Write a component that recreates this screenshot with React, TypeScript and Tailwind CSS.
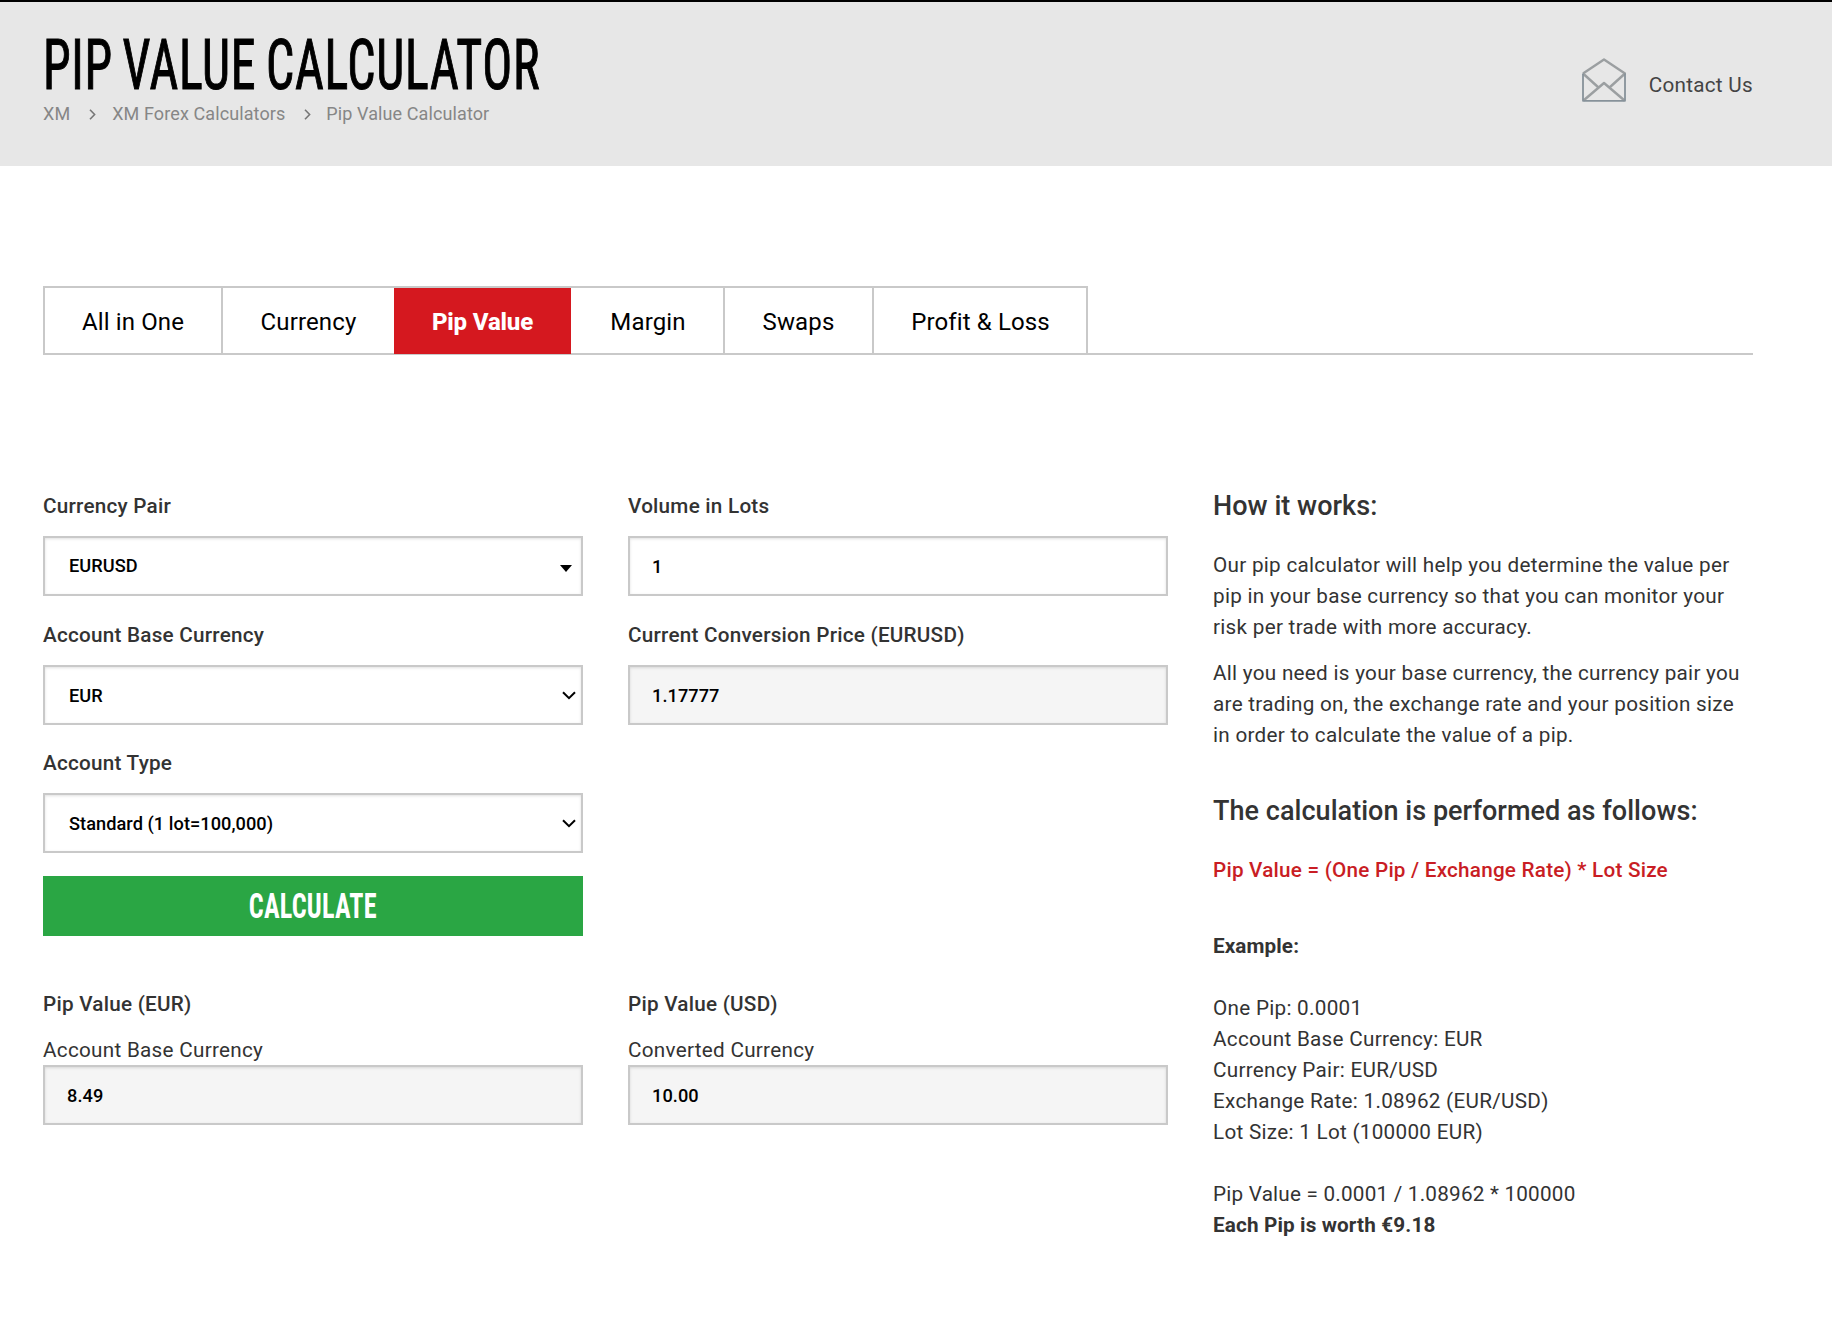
import type { ReactNode } from 'react';
import clsx from 'clsx';

const tabs = [
  { name: 'All in One', width: 'w-[178px]' },
  { name: 'Currency', width: 'w-[171px]' },
  { name: 'Pip Value', width: 'w-[177px]', active: true },
  { name: 'Margin', width: 'w-[154px] pl-[2px]' },
  { name: 'Swaps', width: 'w-[149px]' },
  { name: 'Profit & Loss', width: 'w-[214px] pl-px' },
];

function CrumbArrow() {
  return (
    <svg className="h-[11px] w-[7px]" viewBox="0 0 7 11" fill="none" stroke="#777" strokeWidth="1.6">
      <path d="M1 0.8L5.6 5.5L1 10.2" />
    </svg>
  );
}

function Envelope() {
  return (
    <svg className="h-[44px] w-[44px]" viewBox="0 0 44 44" fill="none" stroke="#9b9fa1" strokeWidth="2.4" strokeLinejoin="round">
      <path d="M1 15.5L22 1.5L43 15.5L27.5 29.5" />
      <path d="M1 15.5L16.5 29.5" />
      <path d="M1.5 42.5L22 25L42.5 42.5" />
      <path d="M1 15.5V42.8H43V15.5" stroke="#87929a" strokeWidth="1.8" />
    </svg>
  );
}

function Caret() {
  return (
    <svg className="mt-1 mr-[9px] h-[7px] w-[12px]" viewBox="0 0 12 7">
      <path d="M0 0H12L6 7Z" fill="#000" />
    </svg>
  );
}

function Chevron() {
  return (
    <svg className="-mt-[2px] mr-[5px] h-[9px] w-[14px]" viewBox="0 0 14 9" fill="none" stroke="#000" strokeWidth="2">
      <path d="M1 1.2L7 7.2L13 1.2" />
    </svg>
  );
}

function Label({ children }: { children: ReactNode }) {
  return <div className="mb-[14px] h-[31px] font-medium tracking-[0.24px] whitespace-nowrap">{children}</div>;
}

function Box({ children, gray, icon, className = 'pl-[22px] pt-[2px]' }: { children: ReactNode; gray?: boolean; icon?: ReactNode; className?: string }) {
  return (
    <div
      className={clsx(
        'flex h-[60px] items-center justify-between border-2 border-[#c9c9c9] text-[18.2px] leading-none font-medium tracking-[0.05px] text-black shadow-[inset_0_1px_3px_rgba(0,0,0,0.12)]',
        gray ? 'bg-[#f5f5f5]' : 'bg-white',
        className,
      )}
    >
      <span>{children}</span>
      {icon}
    </div>
  );
}

export default function App() {
  return (
    <div className="min-h-[1319px] w-full bg-white font-['Roboto',sans-serif] text-[20.7px] leading-[31px] tracking-[0.28px] text-[#333]">
      <header className="flex h-[166px] justify-between border-t-2 border-black bg-[#e7e7e7] pr-[79px] pl-[43px]">
        <div className="pt-[29px]">
          <h1 className="h-[67px] w-[500px] origin-left scale-x-[0.703] text-[71px] leading-[67px] font-normal tracking-[1px] whitespace-nowrap text-black [-webkit-text-stroke:1.1px_black] [font-stretch:75%] [word-spacing:-3.5px]">
            PIP VALUE CALCULATOR
          </h1>
          <nav className="mt-[4px] flex h-[24px] items-center text-[18px] leading-[24px] tracking-[0.1px] text-[#868686]">
            <span className="mr-[19px]">XM</span>
            <CrumbArrow />
            <span className="mr-[19px] ml-[16px]">XM Forex Calculators</span>
            <CrumbArrow />
            <span className="ml-[15px]">Pip Value Calculator</span>
          </nav>
        </div>
        <a className="mt-[56px] flex h-[44px] items-start text-[#444]">
          <Envelope />
          <span className="mt-[12px] ml-[23px]">Contact Us</span>
        </a>
      </header>

      <main className="pr-[79px] pl-[43px]">
        <div className="mt-[120px] flex h-[69px] border-b-2 border-[#c9c9c9]">
          {tabs.map((t, i) => (
            <div
              key={t.name}
              className={clsx(
                'flex h-[67px] items-center justify-center border-t-2 border-[#c9c9c9] pt-[3px] text-[24px]',
                t.width,
                i === 0 && 'w-[180px] border-l-2',
                t.active ? 'relative font-extrabold tracking-[-0.15px] text-white' : 'tracking-[0.13px] text-black',
                i !== 1 && !t.active && 'border-r-2',
              )}
            >
              {t.active && <div className="absolute inset-x-0 top-0 -bottom-px bg-[#d5181f]" />}
              <span className="relative">{t.name}</span>
            </div>
          ))}
        </div>

        <div className="mt-[136px] grid grid-cols-3 gap-x-[45px]">
          <section className="flex flex-col">
            <Label>Currency Pair</Label>
            <Box icon={<Caret />} className="pl-[24px] tracking-[0.4px]">EURUSD</Box>
            <div className="h-[24px]" />
            <Label>Account Base Currency</Label>
            <Box icon={<Chevron />} className="pt-[2px] pl-[24px]">EUR</Box>
            <div className="h-[23px]" />
            <Label>Account Type</Label>
            <Box icon={<Chevron />} className="pt-[2px] pl-[24px]">Standard (1 lot=100,000)</Box>
            <button className="mt-[23px] flex h-[60px] w-full items-center justify-center bg-[#2aa644] text-[34.7px] font-bold text-white [font-stretch:75%]">
              <span className="scale-x-[0.755]">CALCULATE</span>
            </button>
            <div className="h-[53px]" />
            <Label>Pip Value (EUR)</Label>
            <div className="mt-px h-[30px]">Account Base Currency</div>
            <Box gray>8.49</Box>
          </section>

          <section className="flex flex-col">
            <Label>Volume in Lots</Label>
            <Box>1</Box>
            <div className="h-[24px]" />
            <Label>Current Conversion Price (EURUSD)</Label>
            <Box gray>1.17777</Box>
            <div className="h-[264px]" />
            <Label>Pip Value (USD)</Label>
            <div className="mt-px h-[30px]">Converted Currency</div>
            <Box gray>10.00</Box>
          </section>

          <section className="whitespace-nowrap">
            <h2 className="text-[27px] font-medium tracking-[0.04px]">How it works:</h2>
            <p className="mt-[28px]">
              Our pip calculator will help you determine the value per
              <br />
              pip in your base currency so that you can monitor your
              <br />
              risk per trade with more accuracy.
            </p>
            <p className="mt-[15px]">
              All you need is your base currency, the currency pair you
              <br />
              are trading on, the exchange rate and your position size
              <br />
              in order to calculate the value of a pip.
            </p>
            <h2 className="mt-[45px] text-[27px] font-medium tracking-[0.04px]">The calculation is performed as follows:</h2>
            <p className="mt-[28px] font-medium tracking-[0.22px] text-[#c91d24]">Pip Value = (One Pip / Exchange Rate) * Lot Size</p>
            <p className="mt-[45px] font-bold tracking-[0.1px]">Example:</p>
            <p className="mt-[31px]">
              One Pip: 0.0001
              <br />
              Account Base Currency: EUR
              <br />
              Currency Pair: EUR/USD
              <br />
              Exchange Rate: 1.08962 (EUR/USD)
              <br />
              Lot Size: 1 Lot (100000 EUR)
            </p>
            <p className="mt-[31px] tracking-[0.22px]">
              Pip Value = 0.0001 / 1.08962 * 100000
              <br />
              <strong className="font-bold tracking-[0.14px]">Each Pip is worth €9.18</strong>
            </p>
          </section>
        </div>
      </main>
    </div>
  );
}
